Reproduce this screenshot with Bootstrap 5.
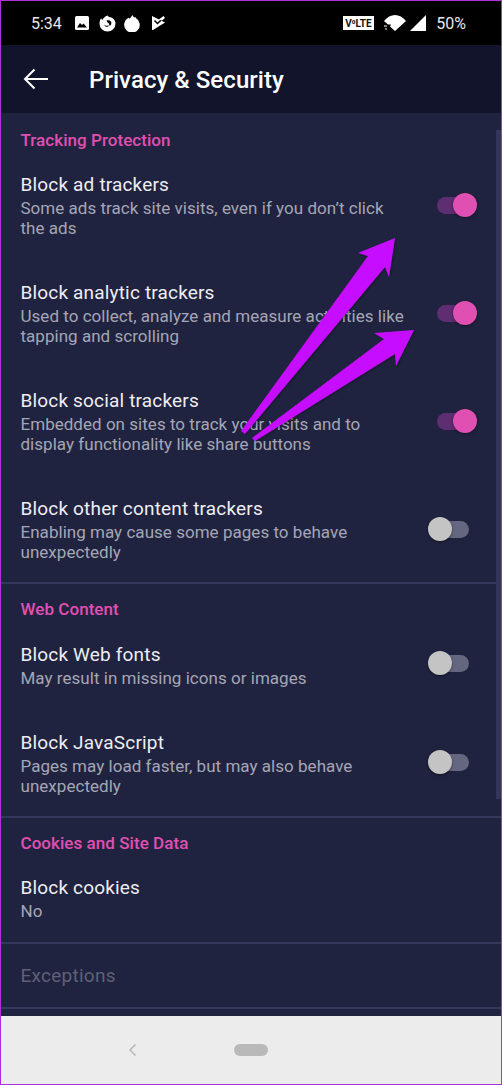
<!DOCTYPE html>
<html lang="en">
<head>
  <meta charset="UTF-8">
  <meta name="viewport" content="width=device-width, initial-scale=1.0">
  <title>Privacy &amp; Security</title>
  <link href="https://cdn.jsdelivr.net/npm/bootstrap@5.3.0/dist/css/bootstrap.min.css" rel="stylesheet">
  <style>
    html, body { height: 1085px; overflow: hidden; }
    body { background: #20233f; font-family: Roboto, sans-serif; }
    .phone-frame { height: 1085px; border: 1px solid #b02fdc; position: relative; overflow: hidden; }
    .status-bar { height: 44px; background: #000; color: #e8e8e8; font-size: 16px; padding: 0 35px 0 30px; }
    .status-bar span { position: relative; top: 1px; }
    .gap-image { margin-left: 13px; }
    .gap-fox { margin-left: 10px; }
    .gap-flame { margin-left: 8px; }
    .gap-check { margin-left: 11px; }
    .gap-wifi { margin-left: 10px; }
    .gap-signal { margin-left: 4px; }
    .gap-pct { margin-left: 10px; }
    .app-bar { height: 68px; background: #12142b; color: #fff; padding-left: 22px; }
    .app-bar h1 { font-size: 24px; font-weight: 500; margin: 2px 0 0 40px; line-height: 1; letter-spacing: .06px; }
    .settings-list { height: 903px; background: #20233f; position: relative; }
    .scroll-thumb { position: absolute; right: 0; top: 0; width: 5px; height: 669px; background: #33365a; }
    .group-title { color: #e04fb2; font-size: 17px; font-weight: 500; height: 20px; line-height: 20px; padding-left: 19.5px; margin: 15px 0 23px; letter-spacing: .05px; }
    .group-first { margin-top: 17px; margin-bottom: 22px; }
    .pref-row { padding: 0 32px 0 19.5px; height: 108px; }
    .row-short { height: 88px; }
    .row-end { height: 86px; }
    .row-last { height: 66px; }
    .pref-name { color: #eeeef2; font-size: 19px; line-height: 24px; letter-spacing: .17px; padding-top: 1px; }
    .pref-desc { color: #a5a6b6; font-size: 17px; line-height: 20px; margin-top: 1px; letter-spacing: .03px; }
    .row-last .pref-name { padding-top: 0; }
    .pref-text { width: 388px; }
    .toggle-slot { margin-top: 25px; }
    .row-short .toggle-slot { margin-top: 13px; }
    .toggle-raised { margin-top: 24px; }
    .pref-off { color: #5f6177; font-size: 19px; padding-left: 19.5px; line-height: 24px; margin: 20px 0 19px; letter-spacing: .25px; }
    .rule-line { height: 2px; background: #35385a; }
    .toggle-track { width: 32px; height: 17px; border-radius: 9px; position: relative; flex: none; }
    .toggle-knob { position: absolute; top: -4px; width: 24px; height: 24px; border-radius: 50%; box-shadow: 0 1px 3px rgba(0,0,0,.45); }
    .toggle-on .toggle-track { background: #5e2d72; }
    .toggle-on .toggle-knob { right: -8px; background: #e04fb2; }
    .toggle-off .toggle-track { background: #656780; }
    .toggle-off .toggle-knob { left: -9px; background: #c4c4c4; }
    .nav-strip { position: absolute; left: 0; right: 0; bottom: 0; height: 68px; background: #ececec; }
    .home-pill { width: 34px; height: 12px; border-radius: 6px; background: #b9b9b9; margin: 0 106px 0 97px; }
    .arrow-layer { position: absolute; left: -1px; top: -1px; pointer-events: none; }
  </style>
</head>
<body>
  <div class="phone-frame">
    <div class="status-bar d-flex align-items-center">
      <span>5:34</span>
      <svg class="gap-image" width="14" height="14" viewBox="0 0 14 14"><rect width="14" height="14" rx="1.500" fill="#fff"/><path d="M2 11.500l3-4.500 2 2 1.500-1.500 3.500 4z" fill="#000"/></svg>
      <svg class="gap-fox" width="17" height="17" viewBox="0 0 17 17"><path d="M8.500 0.500l1.500 1.500c3.500.3 6.500 2.800 6.500 6.500a8 8 0 0 1-16 0c0-2 .6-3.800 1.800-5.200.2.800.5 1.300 1 1.700C4 3.200 6 1.500 8.500.5z" fill="#fff"/><path d="M7.500 5.500c1.500-.5 3.500-.3 4.500 1 .7 1.300.4 3-.6 4l-1.400-.3c.4-.8.200-1.700-.7-2.200-.5-.3-1-.5-1-1z" fill="#000"/><path d="M5 9.500c1 1.300 3.500 1.600 5 .8l-1 1.400c-1.800.5-3.300-.4-4-2.200z" fill="#000"/></svg>
      <svg class="gap-flame" width="17" height="17" viewBox="0 0 17 17"><path d="M8.500 0c.4 1.200 1 2 2 2.500l.8-.8.500 1.300A7.800 7.800 0 1 1 4.500 2.800l1.200 1z" fill="#fff"/></svg>
      <svg class="gap-check" width="13" height="14" viewBox="0 0 13 14"><path d="M0 0l7 3.500 6 3L1 14H0z" fill="#fff"/><path d="M2.500 4.500l3 3L13 .5" fill="none" stroke="#000" stroke-width="1.600"/><path d="M6.500 3.800L11.500 0l1.500 2-3 2.500z" fill="#fff"/></svg>
      <div class="ms-auto d-flex align-items-center">
        <svg width="31" height="14" viewBox="0 0 31 14"><rect width="31" height="14" fill="#fff"/><text x="15.500" y="10.500" font-family="Roboto, sans-serif" font-size="10" font-weight="700" text-anchor="middle" fill="#111">V⁰LTE</text></svg>
        <svg class="gap-wifi" width="22" height="17" viewBox="0 0 22 17"><path d="M0 6C3 2 7 0 11 0s8 2 11 6L11 16 6 11.500 7 9.500H4z" fill="#fff"/><path d="M0 10.500h3v1H0zM1 13.500h2v1H1z" fill="#fff"/></svg>
        <svg class="gap-signal" width="16" height="16" viewBox="0 0 16 16"><path d="M16 0v16H0z" fill="#fff"/></svg>
        <span class="gap-pct">50%</span>
      </div>
    </div>

    <div class="app-bar d-flex align-items-center">
      <svg width="26" height="22" viewBox="0 0 26 22"><path d="M25 11H2M11.500 1.500L2 11l9.500 9.500" fill="none" stroke="#fff" stroke-width="2"/></svg>
      <h1>Privacy &amp; Security</h1>
    </div>

    <div class="settings-list">
      <div class="scroll-thumb"></div>
      <div class="group-title group-first">Tracking Protection</div>
      <div class="pref-row d-flex justify-content-between">
        <div class="pref-text"><div class="pref-name">Block ad trackers</div><div class="pref-desc">Some ads track site visits, even if you don’t click the ads</div></div>
        <div class="toggle-on toggle-slot"><div class="toggle-track"><div class="toggle-knob"></div></div></div>
      </div>
      <div class="pref-row d-flex justify-content-between">
        <div class="pref-text"><div class="pref-name">Block analytic trackers</div><div class="pref-desc">Used to collect, analyze and measure activities like tapping and scrolling</div></div>
        <div class="toggle-on toggle-slot"><div class="toggle-track"><div class="toggle-knob"></div></div></div>
      </div>
      <div class="pref-row d-flex justify-content-between">
        <div class="pref-text"><div class="pref-name">Block social trackers</div><div class="pref-desc">Embedded on sites to track your visits and to display functionality like share buttons</div></div>
        <div class="toggle-on toggle-slot"><div class="toggle-track"><div class="toggle-knob"></div></div></div>
      </div>
      <div class="pref-row row-end d-flex justify-content-between">
        <div class="pref-text"><div class="pref-name">Block other content trackers</div><div class="pref-desc">Enabling may cause some pages to behave unexpectedly</div></div>
        <div class="toggle-off toggle-slot"><div class="toggle-track"><div class="toggle-knob"></div></div></div>
      </div>
      <div class="rule-line"></div>
      <div class="group-title">Web Content</div>
      <div class="pref-row row-short d-flex justify-content-between">
        <div class="pref-text"><div class="pref-name">Block Web fonts</div><div class="pref-desc">May result in missing icons or images</div></div>
        <div class="toggle-off toggle-slot"><div class="toggle-track"><div class="toggle-knob"></div></div></div>
      </div>
      <div class="pref-row row-end d-flex justify-content-between">
        <div class="pref-text"><div class="pref-name">Block JavaScript</div><div class="pref-desc">Pages may load faster, but may also behave unexpectedly</div></div>
        <div class="toggle-off toggle-raised"><div class="toggle-track"><div class="toggle-knob"></div></div></div>
      </div>
      <div class="rule-line"></div>
      <div class="group-title">Cookies and Site Data</div>
      <div class="pref-row row-last">
        <div class="pref-name">Block cookies</div><div class="pref-desc">No</div>
      </div>
      <div class="rule-line"></div>
      <div class="pref-off">Exceptions</div>
      <div class="rule-line"></div>
    </div>

    <div class="nav-strip d-flex align-items-center justify-content-center">
      <svg width="9" height="12" viewBox="0 0 9 12"><path d="M7.500 .5L2 6l5.500 5.500" fill="none" stroke="#b5b5bd" stroke-width="1.500"/></svg>
      <div class="home-pill"></div>
    </div>

    <svg class="arrow-layer" width="502" height="1085" viewBox="0 0 502 1085">
      <defs><filter id="arrowShade" x="-10%" y="-10%" width="120%" height="120%"><feDropShadow dx="1" dy="1" stdDeviation="1" flood-color="#000" flood-opacity=".35"/></filter></defs>
      <g fill="#c70eff" filter="url(#arrowShade)">
        <path d="M241 431L368 256 358 253 395 238 389 277 385 267 245 434z"/>
        <path d="M252 438L384 339 374 333 414 330 396 366 395 354 255 441z"/>
      </g>
    </svg>
  </div>
</body>
</html>
